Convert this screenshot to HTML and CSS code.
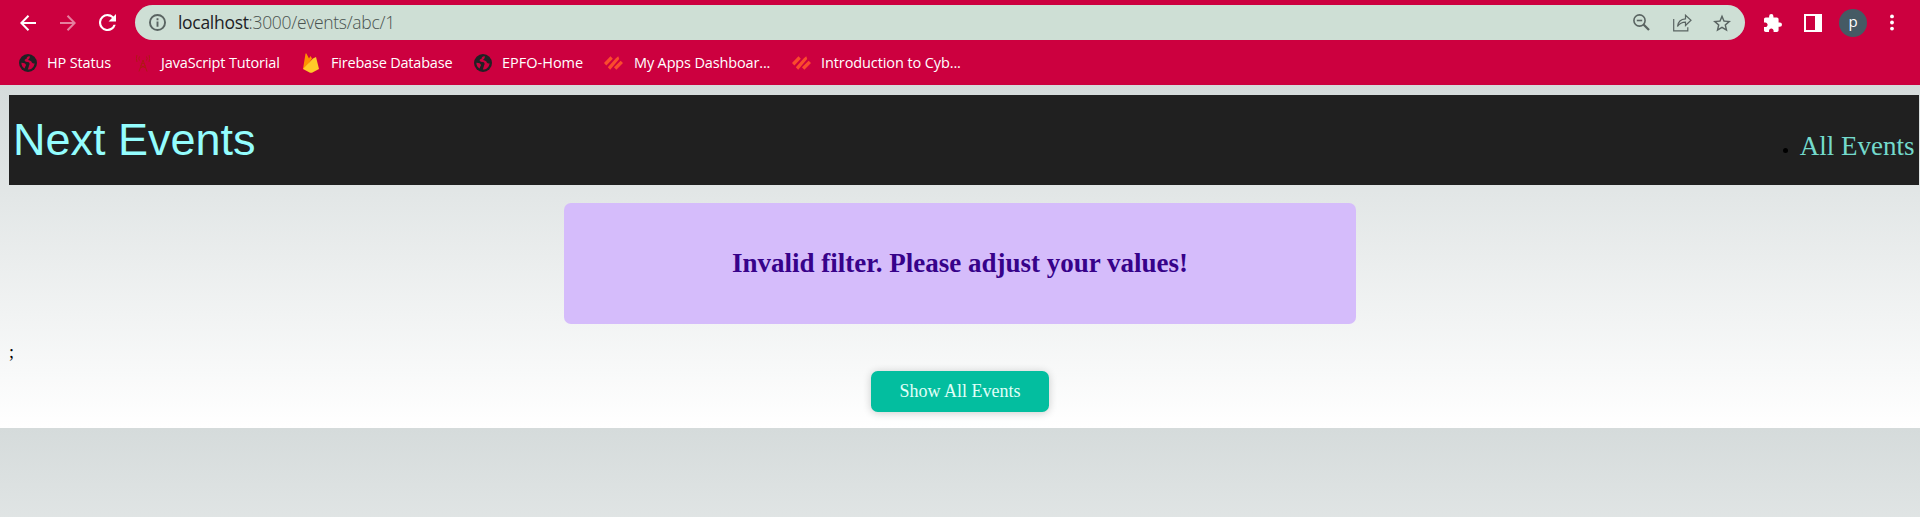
FILE: index.html
```html
<!DOCTYPE html>
<html lang="en">
<head>
<meta charset="utf-8">
<title>Next Events</title>
<link rel="stylesheet" href="styles.css">
</head>
<body>
<svg class="defs" width="0" height="0">
  <symbol id="globe" viewBox="0 0 18 18">
    <circle cx="9" cy="9" r="9" fill="#202124"/>
    <path d="M10.800 2.200C8.500 1.900 7.400 3.600 7.600 4.700C5.600 5 5.200 6.400 6.100 7.300C7.300 8.500 10 7.600 10.500 9.200C10.900 10.500 9.800 11.200 9.800 12.500L8.800 15.600C12.500 15.600 15.300 13 15.600 9.200C13.800 9.900 12.600 8.600 12.400 7.500C11.600 6.400 9.800 6.600 9.200 6C8.900 5.300 11 5.200 10.800 2.200Z" fill="#cc003f"/>
    <path d="M2.400 8.800C4.200 8.600 6.800 9.600 7 10.900C7 12 6 12 5.700 14.600C3.600 13.500 2.300 11.300 2.400 8.800Z" fill="#cc003f"/>
  </symbol>
  <symbol id="palo" viewBox="0 0 20 14">
    <path d="M0 7L6.800 0L9.300 2.500L2.500 9.500ZM4 11.500L12.500 2L15 0L16 2.800L6.500 14ZM10.500 11.500L17.500 4.500L20 7L13 14Z" fill="#fa4b2d"/>
  </symbol>
</svg>
<header class="browser">
  <div class="toolbar">
    <svg class="nav back" viewBox="0 0 16 16"><path d="M16 8H1.500M8.500 .8L1.300 8L8.500 15.200"/></svg>
    <svg class="nav forward" viewBox="0 0 16 16"><path d="M0 8H14.500M7.500 .8L14.700 8L7.500 15.200"/></svg>
    <svg class="reload" viewBox="4 4 16 16"><path d="M17.650 6.350A7.950 7.950 0 0 0 12 4a8 8 0 1 0 7.730 10h-2.080A6 6 0 1 1 12 6c1.660 0 3.140.690 4.220 1.780L13 11h7V4z"/></svg>
    <div class="omnibox">
      <svg class="info" viewBox="0 0 16 16"><circle cx="8" cy="8" r="7.100"/><path d="M8 7v5M8 4v1.800"/></svg>
      <span class="url"><b>localhost</b>:3000/events/abc/1</span>
      <svg class="zoomout" viewBox="0 0 17 17"><circle cx="6.500" cy="6.500" r="5.600"/><path d="M3.800 6.500h5.400"/><path class="handle" d="M10.500 10.500L16 16"/></svg>
      <svg class="share" viewBox="0 0 19 18"><path d="M.7 5V16.800H14.800V13.200M4.500 12.500C5 8 8 5 12.500 4.800V1.200L18 6.200L12.500 11.500V8.200C9 8.200 6.500 9.500 4.500 12.500Z"/></svg>
      <svg class="star" viewBox="2 2 20 19"><path d="M22 9.240l-7.190-.620L12 2 9.190 8.630 2 9.240l5.460 4.730L5.820 21 12 17.270 18.180 21l-1.630-7.030L22 9.240zM12 15.400l-3.760 2.270 1-4.280-3.320-2.880 4.380-.380L12 6.100l1.710 4.040 4.380.380-3.320 2.880 1 4.280L12 15.400z"/></svg>
    </div>
    <svg class="puzzle" viewBox="2 1 21 21"><path d="M20.500 11H19V7c0-1.100-.900-2-2-2h-4V3.500a2.500 2.500 0 0 0-5 0V5H4c-1.100 0-1.990.900-1.990 2v3.800H3.500c1.490 0 2.700 1.210 2.700 2.700s-1.210 2.700-2.700 2.700H2V20c0 1.100.900 2 2 2h3.800v-1.500c0-1.490 1.210-2.700 2.700-2.700s2.700 1.210 2.700 2.700V22H17c1.100 0 2-.900 2-2v-4h1.500a2.500 2.500 0 0 0 0-5z"/></svg>
    <span class="panel"></span>
    <span class="avatar">p</span>
    <svg class="menu" viewBox="0 0 4 16"><circle cx="2" cy="1.900" r="1.900"/><circle cx="2" cy="8" r="1.900"/><circle cx="2" cy="14.100" r="1.900"/></svg>
  </div>
  <nav class="bookmarks">
    <a class="bm hp"><svg><use href="#globe"/></svg><span>HP Status</span></a>
    <a class="bm js"><svg viewBox="0 0 14 18"><path d="M3 17.500L7 6L11 17.500M4.200 14L9.500 11.500M9.800 14L4.500 11.500M5.500 9.500H8.500M3.500 2.500Q2.200 4.500 3.500 6.500M10.500 2.500Q11.800 4.500 10.500 6.500M1 1Q-.5 4.500 1 8M13 1Q14.500 4.500 13 8" fill="none" stroke="#b01716" stroke-width="1"/></svg><span>JavaScript Tutorial</span></a>
    <a class="bm fb"><svg viewBox="0 0 16 20"><path d="M0 16L2.500.8Q3 0 3.500.7L6 5.500L7.500 3L9 5.500L2 16Z" fill="#ff9100"/><path d="M0 16L10 5.500L13 4L16 16L9 19.700Q8 20 7 19.700Z" fill="#ffca28"/></svg><span>Firebase Database</span></a>
    <a class="bm ep"><svg><use href="#globe"/></svg><span>EPFO-Home</span></a>
    <a class="bm my"><svg><use href="#palo"/></svg><span>My Apps Dashboar...</span></a>
    <a class="bm intro"><svg><use href="#palo"/></svg><span>Introduction to Cyb...</span></a>
  </nav>
</header>
<div class="page">
  <header class="site-header">
    <div class="logo">Next Events</div>
    <ul class="links"><li><span>All Events</span></li></ul>
  </header>
  <div class="alert">Invalid filter. Please adjust your values!</div>
  <div class="stray">;</div>
  <a class="button">Show All Events</a>
</div>
<div class="repeat"></div>
</body>
</html>
```

FILE: styles.css
```css
* { box-sizing: border-box; }
body { margin: 0; height: 517px; overflow: hidden; display: flex; flex-direction: column; background: #d5dbdb; font-family: "Liberation Serif", serif; font-size: 18px; }
.defs { position: absolute; }
svg { display: block; flex: none; }
.browser { flex: none; height: 85px; background: #cc003f; font-family: "Open Sans", "Noto Sans", sans-serif; color: #fff; }
.toolbar { display: flex; align-items: center; height: 45px; padding: 0 25px 0 20px; }
.nav { width: 16px; height: 16px; fill: none; stroke: #fff; stroke-width: 2; }
.forward { margin-left: 24px; opacity: .5; }
.reload { width: 17px; height: 17px; margin-left: 23px; fill: #fff; }
.omnibox { display: flex; align-items: center; flex: none; width: 1610px; height: 35px; margin-left: 19px; padding: 0 14px 0 14px; border-radius: 18px; background: #cedfd5; }
.info { width: 17px; height: 17px; fill: none; stroke: #5a6462; stroke-width: 1.8; }
.url { margin-left: 12px; margin-right: auto; font-weight: 300; font-size: 17.500px; line-height: 35px; letter-spacing: -.3px; color: #49524f; white-space: nowrap; }
.url b { font-weight: 400; letter-spacing: -.3px; color: #202124; }
.zoomout { width: 17px; height: 17px; fill: none; stroke: #5a6462; stroke-width: 1.600; }
.zoomout .handle { stroke-width: 2.300; }
.share { width: 19px; height: 18px; margin-left: 23px; fill: none; stroke: #5a6462; stroke-width: 1.200; }
.star { width: 18px; height: 18px; margin-left: 21px; fill: #5a6462; }
.puzzle { width: 18px; height: 18px; margin-left: 19px; fill: #fff; }
.panel { flex: none; width: 18px; height: 18px; margin-left: 22px; border: 2px solid #fff; border-right-width: 7px; }
.avatar { flex: none; width: 28px; height: 28px; margin-left: 17px; border-radius: 50%; background: #455a64; text-align: center; font-size: 15px; line-height: 24px; }
.menu { width: 4px; height: 17px; margin-left: 23px; fill: #fff; }
.bookmarks { display: grid; grid-template-columns: 117px 167px 171px 130px 188px 180px; height: 36px; padding-left: 19px; }
.bm { display: flex; align-items: center; font-size: 14.500px; white-space: nowrap; letter-spacing: -.15px; }
.bm svg { width: 18px; height: 18px; }
.bm span { margin: -2px 0 0 10px; }
.js svg { width: 14px; }
.js span { margin-left: 11px; }
.fb { letter-spacing: -.2px; }
.ep { letter-spacing: 0; }
.fb svg { width: 16px; height: 20px; }
.fb span { margin-left: 12px; }
.my svg, .intro svg { width: 19px; height: 14px; }
.my span { margin-left: 11px; }
.intro { letter-spacing: -.1px; }
.page { flex: none; height: 343px; padding: 10px 1px 0 9px; background: linear-gradient(#d5dbdb, #fff); }
.site-header { display: flex; align-items: baseline; justify-content: space-between; height: 90px; padding: 19px 4.500px 0 4px; background: #202020; }
.logo { font-family: "Liberation Sans", Arial, sans-serif; font-size: 45px; line-height: 52px; color: #94fdfe; }
.links { margin: 0; padding: 0; font-size: 18px; color: #000; }
.links span { font-size: 27px; color: #74dacc; }
.alert { width: 792px; height: 121px; margin: 18px auto 0 555px; border-radius: 7px; background: #d5bcfb; color: #37028a; font-weight: bold; font-size: 27px; line-height: 121px; text-align: center; }
.stray { margin-top: 18px; height: 29px; line-height: 20px; }
.button { display: block; width: 178px; height: 41px; margin: 0 auto 0 862px; border-radius: 6.750px; background: #03be9f; color: #e0fff8; line-height: 41px; text-align: center; box-shadow: 0 1px 9px rgba(0,0,0,.2); }
/* The page gradient starts again below the content; only its first 89px fit. */
.repeat { flex: 1; background: linear-gradient(#d5dbdb, #fff) 0 0 / 100% 343px no-repeat; }
```
